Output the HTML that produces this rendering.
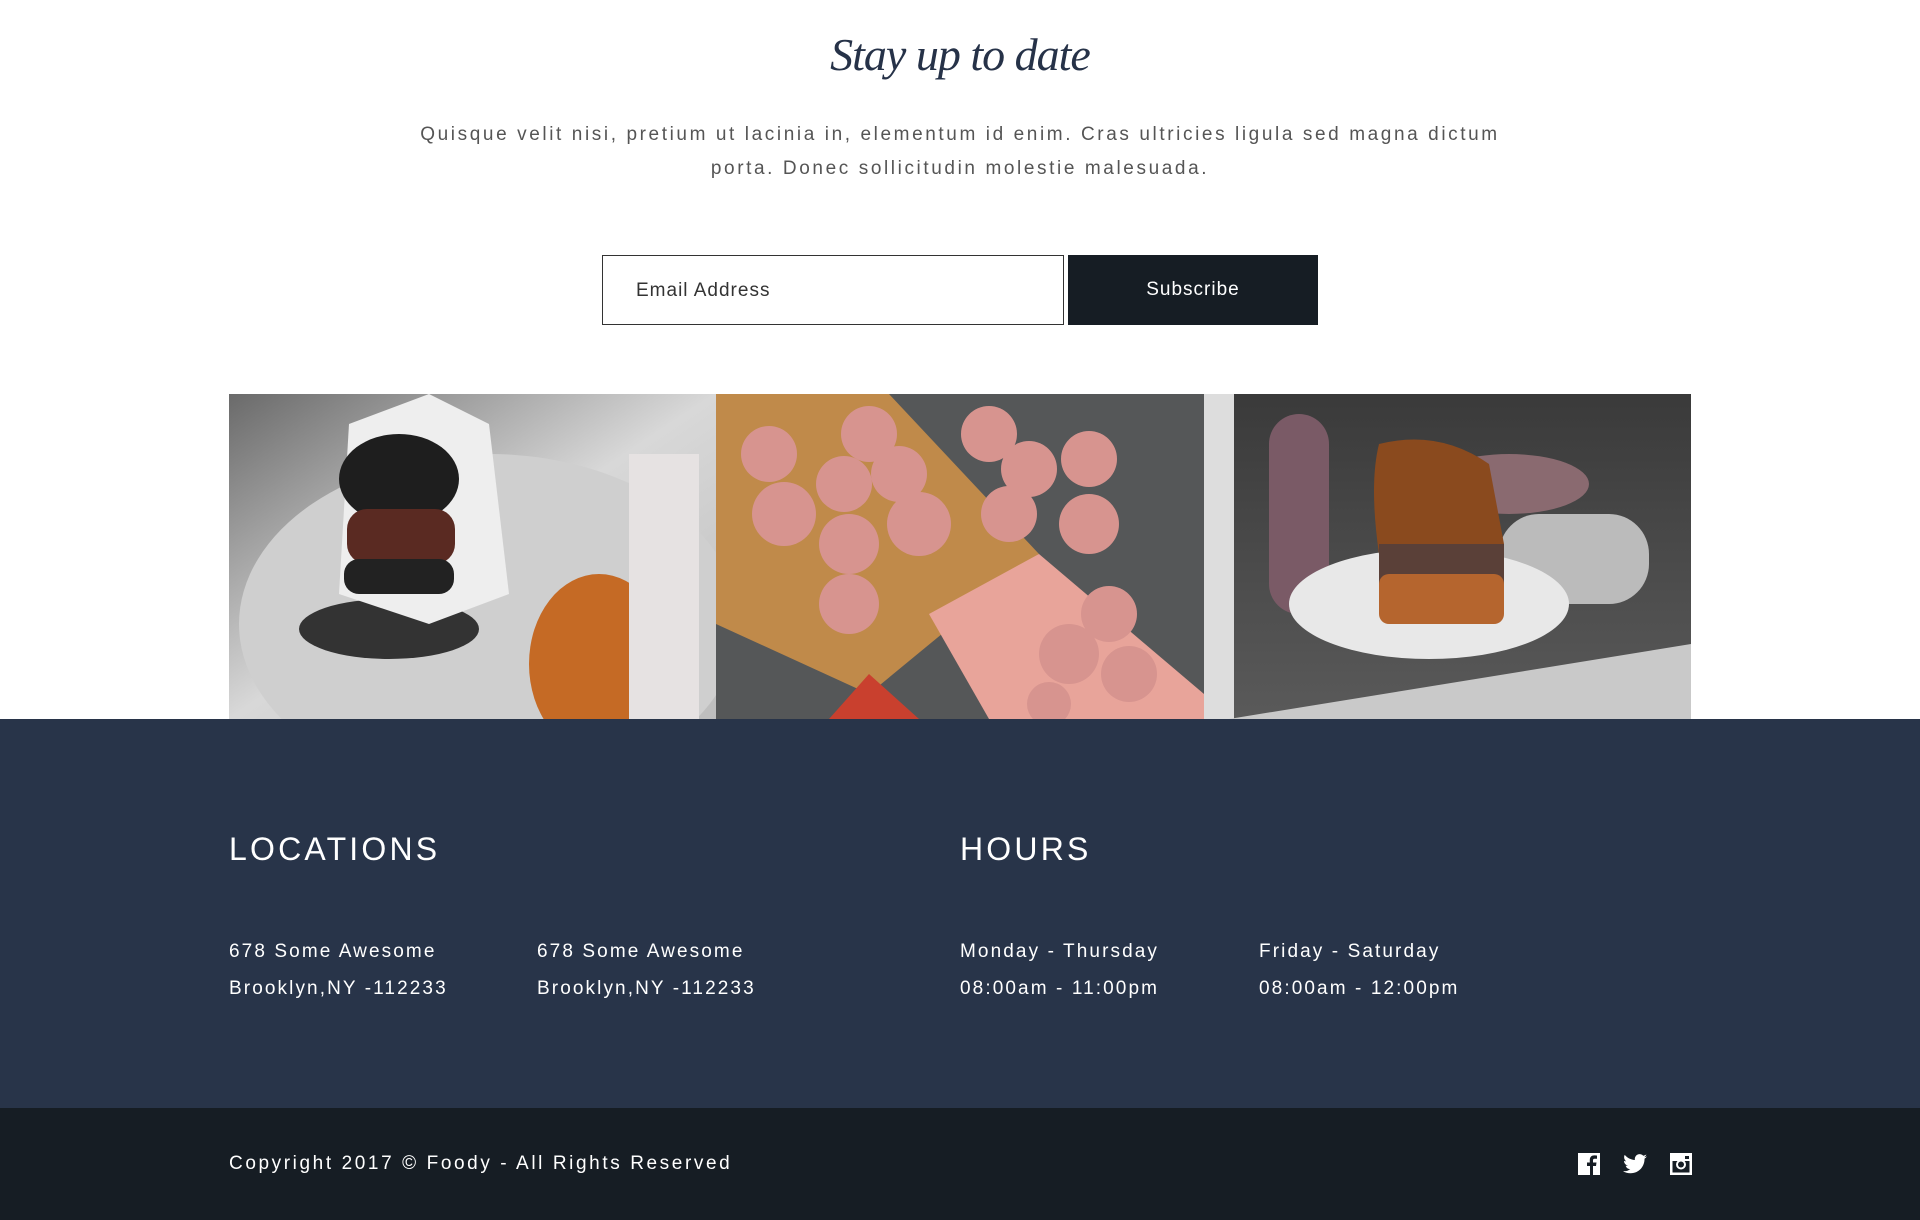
<!DOCTYPE html>
<html><head><meta charset="utf-8"><style>
*{margin:0;padding:0;box-sizing:border-box}
body{width:1920px;height:1220px;background:#fff;font-family:"Liberation Sans",sans-serif;position:relative;overflow:hidden}
.abs{position:absolute}
h1{position:absolute;top:28px;left:0;width:1920px;text-align:center;font-family:"Liberation Serif",serif;font-style:italic;font-weight:normal;font-size:46px;color:#263248;letter-spacing:-1px}
.p{top:118px;left:400px;width:1120px;text-align:center;font-size:19px;line-height:34px;color:#555;letter-spacing:2.6px}
.inp{left:602px;top:255px;width:462px;height:70px;border:1px solid #333;font-size:19px;color:#333;padding:24px 0 0 33px;letter-spacing:1px}
.btn{left:1068px;top:255px;width:250px;height:70px;background:#161d24;color:#fff;font-size:19px;text-align:center;line-height:70px;letter-spacing:1px}
.foot{left:0;top:719px;width:1920px;height:390px;background:#283449}
.bar{left:0;top:1108px;width:1920px;height:112px;background:#161d24}
.hd{font-size:32px;color:#fff;letter-spacing:3.2px;top:831px}
.t{font-size:19px;color:#fff;line-height:37px;letter-spacing:2.1px;top:933px}
</style></head><body>
<h1>Stay up to date</h1>
<div class="abs p">Quisque velit nisi, pretium ut lacinia in, elementum id enim. Cras ultricies ligula sed magna dictum<br>porta. Donec sollicitudin molestie malesuada.</div>
<div class="abs inp">Email Address</div>
<div class="abs btn">Subscribe</div>
<svg class="abs" style="left:229px;top:394px" width="1462" height="325" viewBox="0 0 1462 325">
<defs>
<linearGradient id="g1" x1="0" y1="0" x2="1" y2="1"><stop offset="0" stop-color="#6a6a6a"/><stop offset=".5" stop-color="#d8d8d8"/><stop offset="1" stop-color="#bdbdbd"/></linearGradient>
<linearGradient id="g3" x1="0" y1="0" x2="0" y2="1"><stop offset="0" stop-color="#3a3a3a"/><stop offset="1" stop-color="#5a5a5a"/></linearGradient>
</defs>
<rect x="0" y="0" width="487" height="325" fill="url(#g1)"/>
<ellipse cx="260" cy="230" rx="250" ry="170" fill="#cfcfcf"/>
<ellipse cx="160" cy="235" rx="90" ry="30" fill="#333"/>
<path d="M120 30 L200 0 L260 30 L280 200 L200 230 L110 200Z" fill="#eee"/>
<ellipse cx="170" cy="85" rx="60" ry="45" fill="#1e1e1e"/>
<rect x="118" y="115" width="108" height="55" rx="20" fill="#5a2a22"/>
<rect x="115" y="165" width="110" height="35" rx="15" fill="#222"/>
<ellipse cx="370" cy="270" rx="70" ry="90" fill="#c56a25"/>
<rect x="400" y="60" width="70" height="265" fill="#e6e2e2"/>
<rect x="487" y="0" width="488" height="325" fill="#555758"/>
<path d="M487 0 L660 0 L810 160 L640 300 L487 230Z" fill="#c08a4a"/>
<path d="M700 220 L810 160 L975 300 L975 325 L760 325Z" fill="#e8a49a"/>
<path d="M600 325 L640 280 L690 325Z" fill="#c9402e"/>
<g fill="#d7948f">
<circle cx="540" cy="60" r="28"/><circle cx="555" cy="120" r="32"/><circle cx="640" cy="40" r="28"/><circle cx="615" cy="90" r="28"/><circle cx="670" cy="80" r="28"/><circle cx="620" cy="150" r="30"/><circle cx="690" cy="130" r="32"/><circle cx="620" cy="210" r="30"/><circle cx="760" cy="40" r="28"/><circle cx="800" cy="75" r="28"/><circle cx="780" cy="120" r="28"/><circle cx="860" cy="65" r="28"/><circle cx="860" cy="130" r="30"/><circle cx="880" cy="220" r="28"/><circle cx="840" cy="260" r="30"/><circle cx="900" cy="280" r="28"/><circle cx="820" cy="310" r="22"/>
</g>
<rect x="975" y="0" width="487" height="325" fill="url(#g3)"/>
<rect x="975" y="0" width="30" height="325" fill="#ddd"/>
<rect x="1040" y="20" width="60" height="200" rx="30" fill="#7a5a66"/>
<ellipse cx="1280" cy="90" rx="80" ry="30" fill="#8a6a70"/>
<rect x="1270" y="120" width="150" height="90" rx="40" fill="#bbb"/>
<ellipse cx="1200" cy="210" rx="140" ry="55" fill="#e8e8e8"/>
<path d="M1150 50 Q1210 35 1260 70 L1275 150 L1150 160 Q1140 90 1150 50Z" fill="#8a4a1e"/>
<rect x="1150" y="150" width="125" height="40" fill="#5a4038"/>
<rect x="1150" y="180" width="125" height="50" rx="10" fill="#b5652e"/>
<path d="M1000 325 L1462 250 L1462 325Z" fill="#c9c9c9"/>
</svg>
<div class="abs foot"></div>
<div class="abs hd" style="left:229px">LOCATIONS</div>
<div class="abs hd" style="left:960px">HOURS</div>
<div class="abs t" style="left:229px">678 Some Awesome<br>Brooklyn,NY -112233</div>
<div class="abs t" style="left:537px">678 Some Awesome<br>Brooklyn,NY -112233</div>
<div class="abs t" style="left:960px">Monday - Thursday<br>08:00am - 11:00pm</div>
<div class="abs t" style="left:1259px">Friday - Saturday<br>08:00am - 12:00pm</div>
<div class="abs bar"></div>
<div class="abs" style="left:229px;top:1153px;font-size:19px;color:#fff;letter-spacing:2.6px">Copyright 2017 © Foody - All Rights Reserved</div>
<svg class="abs" style="left:1578px;top:1153px" width="22" height="22" viewBox="0 0 22 22"><rect width="22" height="22" fill="#fff"/><path d="M15 22V13h3l.5-3.5H15V7.5c0-1 .3-1.7 1.8-1.7H19V2.6c-.4 0-1.5-.2-2.7-.2-2.7 0-4.5 1.6-4.5 4.6v2.5H9V13h3v9z" fill="#161d24"/></svg>
<svg class="abs" style="left:1623px;top:1154px" width="24" height="20" viewBox="0 0 24 20"><path d="M24 2.4c-.9.4-1.8.6-2.8.8 1-.6 1.8-1.6 2.2-2.7-1 .6-2 1-3.1 1.2A4.9 4.9 0 0 0 11.9 6C7.8 5.8 4.2 3.8 1.7.9c-1.3 2.3-.3 5 1.5 6.5-.8 0-1.6-.2-2.2-.6 0 2.4 1.7 4.4 3.900 4.8-.7.2-1.5.2-2.2.1.6 2 2.4 3.4 4.6 3.4A9.9 9.9 0 0 1 0 17.1 14 14 0 0 0 7.5 19.3c9.1 0 14-7.5 14-14v-.6c1-.7 1.8-1.5 2.5-2.3z" fill="#fff"/></svg>
<svg class="abs" style="left:1670px;top:1153px" width="22" height="22" viewBox="0 0 22 22"><rect width="22" height="22" fill="#fff"/><rect x="2.5" y="8" width="17" height="11.5" fill="#161d24"/><circle cx="11" cy="11.5" r="5" fill="#fff"/><circle cx="11" cy="11.5" r="3" fill="#161d24"/><rect x="15" y="3" width="4" height="3" fill="#161d24"/></svg>
</body></html>
